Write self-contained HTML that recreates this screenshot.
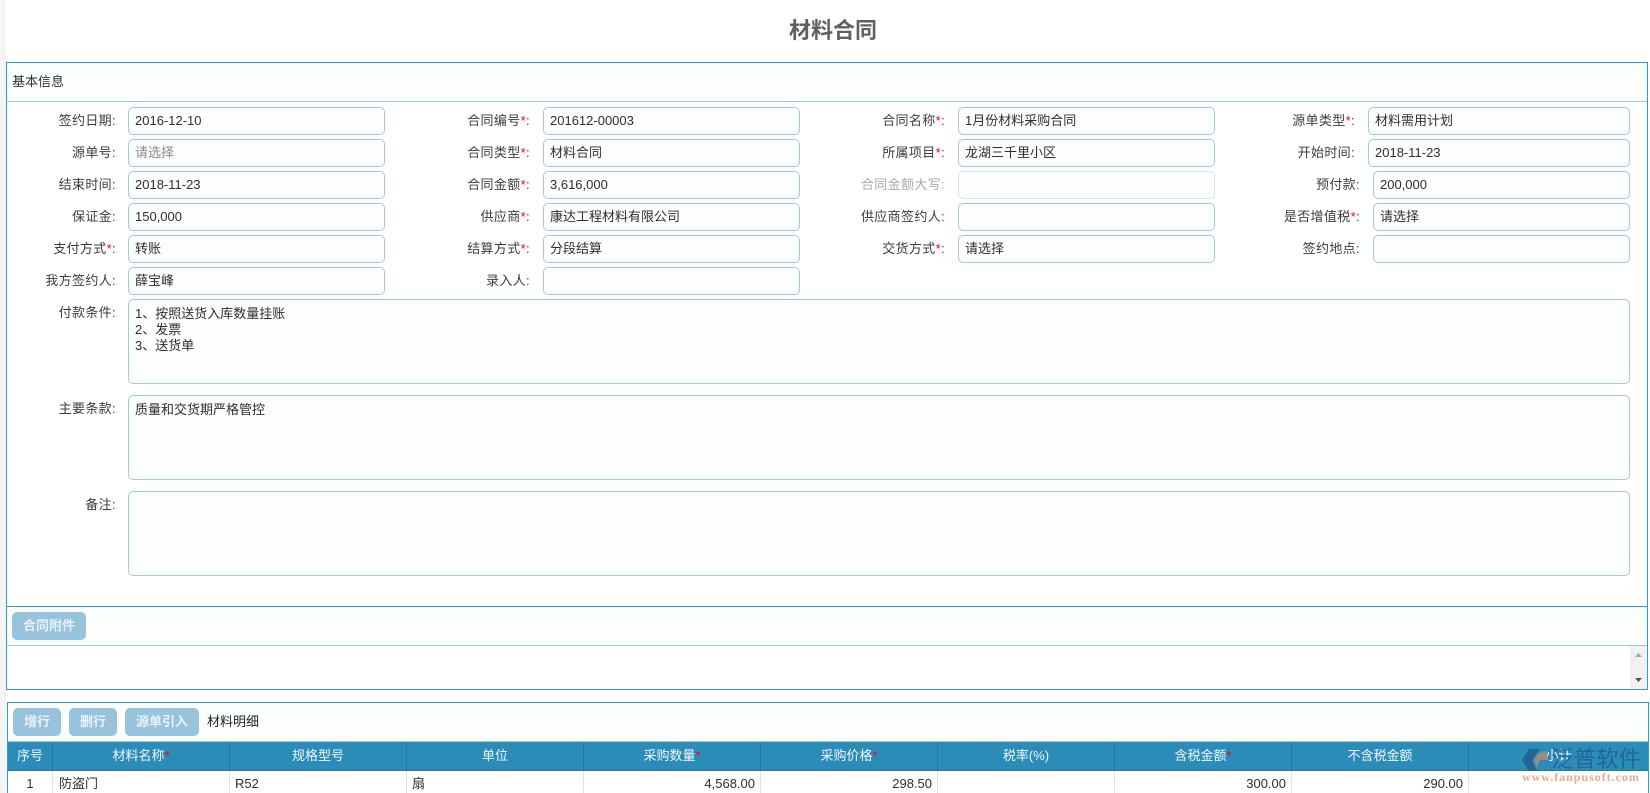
<!DOCTYPE html>
<html lang="zh"><head><meta charset="utf-8"><title>材料合同</title>
<style>
html,body{margin:0;padding:0;background:#fff;overflow:hidden;height:793px;}
body{position:relative;width:1650px;font:13px/16px "Liberation Sans","Noto Sans CJK SC",sans-serif;color:#333;}
div,span{box-sizing:border-box;position:absolute;}
b{font-weight:normal;color:#f00;}
#wrap{left:0;top:0;width:1650px;height:793px;overflow:hidden;background:#fff;}
.strip{left:0;top:0;width:6px;height:793px;background:#f5f5f5;}
.title{left:0;width:1666px;top:16px;height:30px;line-height:30px;text-align:center;font-size:22px;font-weight:bold;color:#606060;}
.panel{border:1px solid #27a0d8;background:#fff;}
.bar{background:#fbfefd;}
.line{height:1px;background:#9cc6df;}
.l{width:140px;height:28px;line-height:28px;text-align:right;white-space:nowrap;color:#3c3c3c;letter-spacing:.35px;}
.i{height:28px;line-height:26px;border:1px solid #a3c9e2;border-radius:5px;background:#fbfefd;padding-left:6px;white-space:nowrap;color:#2e2e2e;}
.t{border:1px solid #a3c9e2;border-radius:5px;background:#fbfefd;padding:6px 6px;line-height:16px;left:128px;width:1502px;height:85px;color:#2e2e2e;}
.btn{height:28px;line-height:28px;background:#97c4dc;border-radius:5px;color:#e8f3f8;text-align:center;font-weight:bold;}
.th{top:742px;height:29px;line-height:27px;background:#2b8bb9;color:#f2f8fb;text-align:center;border-right:1px solid #2378a3;border-bottom:1px solid #2378a3;}
.td{top:771px;height:22px;line-height:25px;background:#fff;color:#2e2e2e;border-right:1px solid #e2e2e2;padding:0 5px;white-space:nowrap;}
.r{text-align:right;}
</style></head><body>
<div id="wrap">
<div class="strip"></div>
<div class="title">材料合同</div>

<div class="panel" style="left:6px;top:62px;width:1642px;height:628px;"></div>
<div class="bar" style="left:7px;top:63px;width:1640px;height:38px;"></div>
<div style="left:12px;top:74px;color:#2e2e2e;">基本信息</div>
<div class="line" style="left:7px;top:101px;width:1640px;"></div>

<div class="l" style="left:-24px;top:107px;">签约日期:</div><div class="i" style="left:128px;top:107px;width:257px;">2016-12-10</div>
<div class="l" style="left:390px;top:107px;">合同编号<b>*</b>:</div><div class="i" style="left:543px;top:107px;width:257px;">201612-00003</div>
<div class="l" style="left:805px;top:107px;">合同名称<b>*</b>:</div><div class="i" style="left:958px;top:107px;width:257px;">1月份材料采购合同</div>
<div class="l" style="left:1215px;top:107px;">源单类型<b>*</b>:</div><div class="i" style="left:1368px;top:107px;width:262px;">材料需用计划</div>

<div class="l" style="left:-24px;top:139px;">源单号:</div><div class="i" style="left:128px;top:139px;width:257px;color:#888;">请选择</div>
<div class="l" style="left:390px;top:139px;">合同类型<b>*</b>:</div><div class="i" style="left:543px;top:139px;width:257px;">材料合同</div>
<div class="l" style="left:805px;top:139px;">所属项目<b>*</b>:</div><div class="i" style="left:958px;top:139px;width:257px;">龙湖三千里小区</div>
<div class="l" style="left:1215px;top:139px;">开始时间:</div><div class="i" style="left:1368px;top:139px;width:262px;">2018-11-23</div>

<div class="l" style="left:-24px;top:171px;">结束时间:</div><div class="i" style="left:128px;top:171px;width:257px;">2018-11-23</div>
<div class="l" style="left:390px;top:171px;">合同金额<b>*</b>:</div><div class="i" style="left:543px;top:171px;width:257px;">3,616,000</div>
<div class="l" style="left:805px;top:171px;color:#aaa;">合同金额大写:</div><div class="i" style="left:958px;top:171px;width:257px;border-color:#d5e5f0;"></div>
<div class="l" style="left:1220px;top:171px;">预付款:</div><div class="i" style="left:1373px;top:171px;width:257px;">200,000</div>

<div class="l" style="left:-24px;top:203px;">保证金:</div><div class="i" style="left:128px;top:203px;width:257px;">150,000</div>
<div class="l" style="left:390px;top:203px;">供应商<b>*</b>:</div><div class="i" style="left:543px;top:203px;width:257px;">康达工程材料有限公司</div>
<div class="l" style="left:805px;top:203px;">供应商签约人:</div><div class="i" style="left:958px;top:203px;width:257px;"></div>
<div class="l" style="left:1220px;top:203px;">是否增值税<b>*</b>:</div><div class="i" style="left:1373px;top:203px;width:257px;">请选择</div>

<div class="l" style="left:-24px;top:235px;">支付方式<b>*</b>:</div><div class="i" style="left:128px;top:235px;width:257px;">转账</div>
<div class="l" style="left:390px;top:235px;">结算方式<b>*</b>:</div><div class="i" style="left:543px;top:235px;width:257px;">分段结算</div>
<div class="l" style="left:805px;top:235px;">交货方式<b>*</b>:</div><div class="i" style="left:958px;top:235px;width:257px;">请选择</div>
<div class="l" style="left:1220px;top:235px;">签约地点:</div><div class="i" style="left:1373px;top:235px;width:257px;"></div>

<div class="l" style="left:-24px;top:267px;">我方签约人:</div><div class="i" style="left:128px;top:267px;width:257px;">薛宝峰</div>
<div class="l" style="left:390px;top:267px;">录入人:</div><div class="i" style="left:543px;top:267px;width:257px;"></div>

<div class="l" style="left:-24px;top:299px;">付款条件:</div>
<div class="t" style="top:299px;">1、按照送货入库数量挂账<br>2、发票<br>3、送货单</div>
<div class="l" style="left:-24px;top:395px;">主要条款:</div>
<div class="t" style="top:395px;">质量和交货期严格管控</div>
<div class="l" style="left:-24px;top:491px;">备注:</div>
<div class="t" style="top:491px;"></div>

<div style="left:7px;top:606px;width:1640px;height:1px;background:#27a0d8;"></div>
<div class="bar" style="left:7px;top:607px;width:1640px;height:38px;"></div>
<div class="btn" style="left:12px;top:612px;width:74px;">合同附件</div>
<div class="line" style="left:7px;top:645px;width:1640px;"></div>
<div style="left:1630px;top:646px;width:17px;height:43px;background:#f1f1f1;">
<svg width="17" height="43" style="position:absolute;left:0;top:0"><path d="M5 11L12 11L8.5 7Z" fill="#a8a8a8"/><path d="M5 32L12 32L8.5 36Z" fill="#505050"/></svg></div>

<div class="panel" style="left:7px;top:702px;width:1642px;height:100px;"></div>
<div class="bar" style="left:8px;top:703px;width:1640px;height:38px;"></div>
<div class="btn" style="left:13px;top:708px;width:48px;">增行</div>
<div class="btn" style="left:69px;top:708px;width:48px;">删行</div>
<div class="btn" style="left:125px;top:708px;width:74px;">源单引入</div>
<div style="left:207px;top:714px;color:#222;">材料明细</div>
<div style="left:8px;top:741px;width:1640px;height:1px;background:#a9c9da;"></div>

<div class="th" style="left:8px;width:45px;">序号</div>
<div class="th" style="left:53px;width:177px;">材料名称<b>*</b></div>
<div class="th" style="left:230px;width:177px;">规格型号</div>
<div class="th" style="left:407px;width:177px;">单位</div>
<div class="th" style="left:584px;width:177px;">采购数量<b>*</b></div>
<div class="th" style="left:761px;width:177px;">采购价格<b>*</b></div>
<div class="th" style="left:938px;width:177px;">税率(%)</div>
<div class="th" style="left:1115px;width:177px;">含税金额<b>*</b></div>
<div class="th" style="left:1292px;width:177px;">不含税金额</div>
<div class="th" style="left:1469px;width:179px;border-right:0;">小计</div>

<div class="td" style="left:8px;width:45px;text-align:center;">1</div>
<div class="td" style="left:53px;width:177px;padding-left:6px;">防盗门</div>
<div class="td" style="left:230px;width:177px;">R52</div>
<div class="td" style="left:407px;width:177px;">扇</div>
<div class="td r" style="left:584px;width:177px;">4,568.00</div>
<div class="td r" style="left:761px;width:177px;">298.50</div>
<div class="td" style="left:938px;width:177px;"></div>
<div class="td r" style="left:1115px;width:177px;">300.00</div>
<div class="td r" style="left:1292px;width:177px;">290.00</div>
<div class="td" style="left:1469px;width:179px;border-right:0;"></div>

<svg width="30" height="26" style="position:absolute;left:1521px;top:748px;"><path d="M8 1L19 1L11 12L16 23L8 23L1 12Z" fill="#1f5f90" opacity=".85"/><path d="M13 13Q15 4 26 3L27 12L19 12L15 20Z" fill="#b08a78" opacity=".85"/></svg>
<div style="left:1551px;top:747px;font-size:22.5px;line-height:26px;color:#1f5f90;opacity:.82;white-space:nowrap;">泛普软件</div>
<div style="left:1522px;top:771px;font:bold 12px/13px 'Liberation Serif',serif;letter-spacing:.97px;color:#eba78f;white-space:nowrap;">www.fanpusoft.com</div>
</div>
</body></html>
